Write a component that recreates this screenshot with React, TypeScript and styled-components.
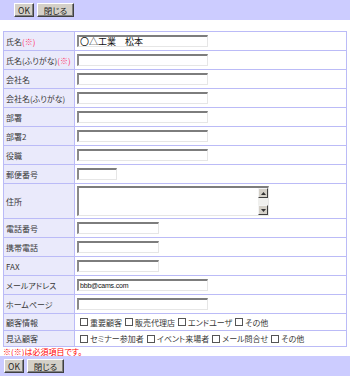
import React from "react";
import styled, { createGlobalStyle } from "styled-components";

const Global = createGlobalStyle`
  html, body { margin: 0; padding: 0; background: #fff; }
  body {
    font-family: "Noto Sans CJK JP", "DejaVu Sans", sans-serif;
    font-size: 8px;
    color: #333;
    font-feature-settings: "palt";
  }
  * { box-sizing: border-box; }
`;

const Page = styled.div`
  width: 350px;
  height: 376px;
  overflow: hidden;
  display: flex;
  flex-direction: column;
`;

const Bar = styled.div<{ $pad: number }>`
  height: 20px;
  background: #ccccff;
  display: flex;
  align-items: center;
  gap: 3px;
  padding-left: ${(p) => p.$pad}px;
  flex-shrink: 0;
`;

const Btn = styled.button<{ $w: number }>`
  width: ${(p) => p.$w}px;
  height: 14px;
  padding: 0;
  margin: 0;
  background: #d4d0c8;
  border: 1px solid;
  border-color: #ffffff #404040 #404040 #ffffff;
  box-shadow: inset -1px -1px 0 #808080;
  font-family: "Noto Sans CJK JP", "DejaVu Sans", sans-serif;
  font-feature-settings: "palt";
  font-size: 8.5px;
  line-height: 12px;
  color: #222;
  display: flex;
  align-items: center;
  justify-content: center;
`;

const Form = styled.div`
  margin: 11px 3px 0 3px;
  display: grid;
  grid-template-columns: 70px 1fr;
  gap: 1px;
  padding: 1px;
  background: #bbbbf7;
  flex-shrink: 0;
`;

const Label = styled.div<{ $h: number }>`
  height: ${(p) => p.$h}px;
  background: #eaeafb;
  display: flex;
  align-items: center;
  padding-left: 2px;
  font-size: 8px;
  color: #383838;
  white-space: nowrap;
`;

const Req = styled.span`
  color: #ff3366;
`;

const Value = styled.div<{ $h: number }>`
  height: ${(p) => p.$h}px;
  background: #ffffff;
  display: flex;
  align-items: center;
  padding-left: 2px;
`;

const Input = styled.div<{ $w: number; $latin?: boolean }>`
  width: ${(p) => p.$w}px;
  height: 12px;
  border-style: solid;
  border-width: 2px 1px 1px 2px;
  border-color: #7d7d7d #e6e6e6 #e6e6e6 #8a8a8a;
  background: #fff;
  font-family: ${(p) =>
    p.$latin ? '"Liberation Sans", Arial, sans-serif' : '"Noto Sans CJK JP", sans-serif'};
  font-size: ${(p) => (p.$latin ? 7 : 9)}px;
  letter-spacing: ${(p) => (p.$latin ? -0.2 : 0)}px;
  line-height: 8px;
  color: #111;
  padding-left: 1px;
  white-space: nowrap;
  overflow: hidden;
  display: flex;
  align-items: center;
`;

const TextArea = styled.div`
  width: 192px;
  height: 30px;
  border-style: solid;
  border-width: 2px 1px 1px 2px;
  border-color: #7d7d7d #e6e6e6 #e6e6e6 #8a8a8a;
  background: #fff;
  display: flex;
  justify-content: flex-end;
`;

const Scroll = styled.div`
  width: 10px;
  background: #f0f0ee;
  display: flex;
  flex-direction: column;
  justify-content: space-between;
`;

const Arrow = styled.div`
  width: 10px;
  height: 10px;
  background: #d4d0c8;
  border: 1px solid;
  border-color: #f4f4f4 #404040 #404040 #f4f4f4;
  display: flex;
  align-items: center;
  justify-content: center;
`;

const Checks = styled.div`
  display: flex;
  align-items: center;
  gap: 3px;
  font-size: 8px;
  color: #383838;
  padding-left: 3px;
  white-space: nowrap;
`;

const CheckItem = styled.span`
  display: flex;
  align-items: center;
  gap: 2px;
`;

const Box = styled.span`
  display: inline-block;
  width: 8px;
  height: 8px;
  border: 1px solid #555;
  background: #fff;
`;

const Note = styled.div`
  height: 9px;
  margin-left: 3px;
  color: #ff0000;
  font-size: 8px;
  line-height: 9px;
  white-space: nowrap;
  flex-shrink: 0;
`;

type Row =
  | { label: string; req?: boolean; kind: "input"; w: number; value?: string; latin?: boolean }
  | { label: string; kind: "textarea" }
  | { label: string; kind: "checks"; items: string[]; h: number };

const rows: Row[] = [
  { label: "氏名", req: true, kind: "input", w: 131, value: "〇△工業　松本" },
  { label: "氏名(ふりがな)", req: true, kind: "input", w: 131 },
  { label: "会社名", kind: "input", w: 131 },
  { label: "会社名(ふりがな)", kind: "input", w: 131 },
  { label: "部署", kind: "input", w: 131 },
  { label: "部署2", kind: "input", w: 131 },
  { label: "役職", kind: "input", w: 131 },
  { label: "郵便番号", kind: "input", w: 40 },
  { label: "住所", kind: "textarea" },
  { label: "電話番号", kind: "input", w: 82 },
  { label: "携帯電話", kind: "input", w: 82 },
  { label: "FAX", kind: "input", w: 82 },
  { label: "メールアドレス", kind: "input", w: 131, value: "bbb@cams.com", latin: true },
  { label: "ホームページ", kind: "input", w: 131 },
  { label: "顧客情報", kind: "checks", h: 16, items: ["重要顧客", "販売代理店", "エンドユーザ", "その他"] },
  { label: "見込顧客", kind: "checks", h: 15, items: ["セミナー参加者", "イベント来場者", "メール問合せ", "その他"] },
];

const heightOf = (r: Row) => (r.kind === "textarea" ? 34 : r.kind === "checks" ? r.h : 18);

const Buttons = ({ pad }: { pad: number }) => (
  <Bar $pad={pad}>
    <Btn $w={20}>OK</Btn>
    <Btn $w={37}>閉じる</Btn>
  </Bar>
);

export default function App() {
  return (
    <Page>
      <Global />
      <Buttons pad={14} />
      <Form>
        {rows.map((r) => {
          const h = heightOf(r);
          return (
            <React.Fragment key={r.label}>
              <Label $h={h}>
                {r.label}
                {r.kind === "input" && r.req ? <Req>(※)</Req> : null}
              </Label>
              <Value $h={h}>
                {r.kind === "input" && (
                  <Input $w={r.w} $latin={r.latin}>
                    {r.value ?? ""}
                  </Input>
                )}
                {r.kind === "textarea" && (
                  <TextArea>
                    <Scroll>
                      <Arrow>
                        <svg width="5" height="3" viewBox="0 0 5 3">
                          <polygon points="2.5,0 5,3 0,3" fill="#333" />
                        </svg>
                      </Arrow>
                      <Arrow>
                        <svg width="5" height="3" viewBox="0 0 5 3">
                          <polygon points="0,0 5,0 2.5,3" fill="#333" />
                        </svg>
                      </Arrow>
                    </Scroll>
                  </TextArea>
                )}
                {r.kind === "checks" && (
                  <Checks>
                    {r.items.map((it) => (
                      <CheckItem key={it}>
                        <Box />
                        {it}
                      </CheckItem>
                    ))}
                  </Checks>
                )}
              </Value>
            </React.Fragment>
          );
        })}
      </Form>
      <Note>※(※)は必須項目です。</Note>
      <Buttons pad={4} />
    </Page>
  );
}
